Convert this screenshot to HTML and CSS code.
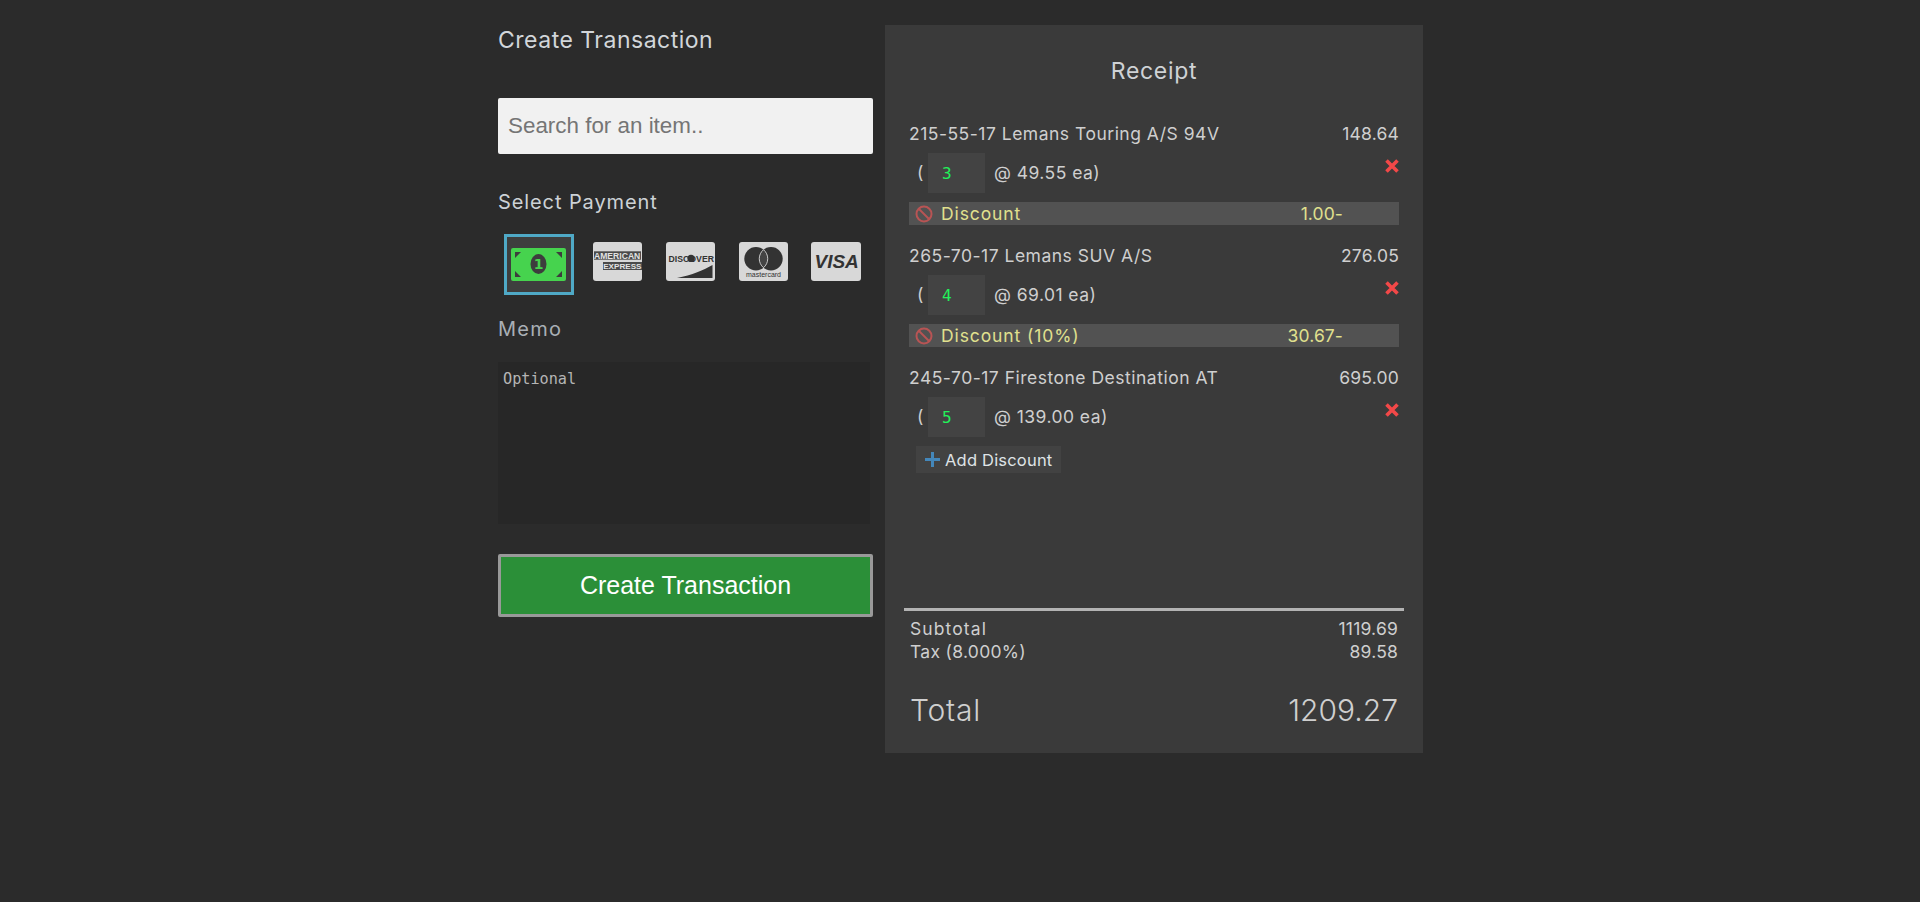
FILE: index.html
```html
<!DOCTYPE html>
<html lang="en">
<head>
<meta charset="utf-8">
<title>Create Transaction</title>
<link rel="stylesheet" href="styles.css">
</head>
<body>
<main class="page">
  <section class="left">
    <h2 class="heading">Create Transaction</h2>
    <input class="search" type="text" placeholder="Search for an item..">
    <h3 class="label">Select Payment</h3>
    <div class="payments">
      <div class="cash">
        <svg width="55" height="33" viewBox="0 0 55 33">
          <rect width="55" height="33" rx="2" fill="#46d34e"/>
          <path d="M4 4h6L4 10zM51 4v6l-6-6zM4 29v-6l6 6zM51 29h-6l6-6z" fill="#3d3d3d"/>
          <ellipse cx="27.5" cy="16" rx="8" ry="10" fill="#3d3d3d"/>
          <text x="27.5" y="21" class="cash-one">1</text>
        </svg>
      </div>
      <svg class="card" viewBox="0 0 49 39">
        <rect width="49" height="39" rx="3" fill="#d8d8d8"/>
        <rect x="1" y="9.3" width="47" height="8.4" fill="#4a4a4a"/>
        <rect x="10" y="20" width="39" height="8" fill="#4a4a4a"/>
        <text x="1" y="16.8" class="amex">AMERICAN</text>
        <text x="10.2" y="27.2" class="amex-two">EXPRESS</text>
      </svg>
      <svg class="card" viewBox="0 0 49 39">
        <rect width="49" height="39" rx="3" fill="#d8d8d8"/>
        <text x="2.6" y="19.6" class="disc">DISCOVER</text>
        <circle cx="25" cy="16.4" r="3.6" fill="#333"/>
        <path d="M11 36 C26 33 38 28 46.5 23V36z" fill="#333"/>
      </svg>
      <svg class="card" viewBox="0 0 49 39">
        <rect width="49" height="39" rx="3" fill="#d8d8d8"/>
        <circle cx="17" cy="16.7" r="11.7" fill="#333"/>
        <circle cx="32" cy="16.7" r="11.7" fill="#333"/>
        <path d="M24.5 7.7A11.7 11.7 0 0 1 24.5 25.7A11.7 11.7 0 0 1 24.5 7.7z" fill="#444" stroke="#d8d8d8" stroke-width=".9"/>
        <text x="7" y="34.5" class="mc">mastercard</text>
      </svg>
      <svg class="card card-visa" viewBox="0 0 50 39">
        <rect width="50" height="39" rx="3" fill="#d8d8d8"/>
        <text x="3.5" y="26.3" class="visa">VISA</text>
      </svg>
    </div>
    <h3 class="label memo-label">Memo</h3>
    <textarea class="memo" placeholder="Optional"></textarea>
    <button class="create" type="button">Create Transaction</button>
  </section>

  <section class="receipt">
    <h2 class="receipt-title">Receipt</h2>
    <div class="items">
      <article class="item">
        <div class="line"><span class="name">215-55-17 Lemans Touring A/S 94V</span><span class="amt">148.64</span></div>
        <div class="qty-row">
          <span class="paren">(</span><input class="qty" type="text" value="3"><span class="each">@ 49.55 ea)</span>
          <svg class="remove" viewBox="0 0 16 16"><path d="M2.5 2.5l11 11M13.5 2.5l-11 11"/></svg>
        </div>
        <div class="discount">
          <svg class="ban" viewBox="0 0 18 18"><circle cx="9" cy="9" r="7.5"/><path d="M4 4l10 10"/></svg>
          <span class="discount-name">Discount</span><span class="discount-amt">1.00-</span>
        </div>
      </article>
      <article class="item">
        <div class="line"><span class="name">265-70-17 Lemans SUV A/S</span><span class="amt">276.05</span></div>
        <div class="qty-row">
          <span class="paren">(</span><input class="qty" type="text" value="4"><span class="each">@ 69.01 ea)</span>
          <svg class="remove" viewBox="0 0 16 16"><path d="M2.5 2.5l11 11M13.5 2.5l-11 11"/></svg>
        </div>
        <div class="discount">
          <svg class="ban" viewBox="0 0 18 18"><circle cx="9" cy="9" r="7.5"/><path d="M4 4l10 10"/></svg>
          <span class="discount-name">Discount (10%)</span><span class="discount-amt">30.67-</span>
        </div>
      </article>
      <article class="item">
        <div class="line"><span class="name">245-70-17 Firestone Destination AT</span><span class="amt">695.00</span></div>
        <div class="qty-row">
          <span class="paren">(</span><input class="qty" type="text" value="5"><span class="each">@ 139.00 ea)</span>
          <svg class="remove" viewBox="0 0 16 16"><path d="M2.5 2.5l11 11M13.5 2.5l-11 11"/></svg>
        </div>
        <button class="add-discount" type="button">
          <svg class="plus" viewBox="0 0 15 15"><path d="M7.5 0v15M0 7.5h15"/></svg>Add Discount
        </button>
      </article>
    </div>
    <div class="totals">
      <div class="sub"><span class="sub-name">Subtotal</span><span class="sub-amt">1119.69</span></div>
      <div class="sub"><span class="sub-name sub-tax">Tax (8.000%)</span><span class="sub-amt">89.58</span></div>
      <div class="grand"><span class="grand-name">Total</span><span>1209.27</span></div>
    </div>
  </section>
</main>
</body>
</html>
```
FILE: styles.css
```css
* { box-sizing: border-box; }
html, body { margin: 0; height: 100%; }
body {
  background: #2b2b2b;
  color: #cfcfcf;
  font-family: Inter, "Liberation Sans", sans-serif;
}
.page {
  display: flex;
  justify-content: center;
  gap: 11px;
  padding: 25px 0 0 1px;
}
.left { width: 376px; display: flex; flex-direction: column; }
.heading {
  margin: 0;
  font-size: 23px;
  line-height: 30px;
  font-weight: 400;
  letter-spacing: .5px;
  color: #d2d6da;
}
.search {
  margin-top: 43px;
  width: 375px;
  height: 56px;
  border: 0;
  border-radius: 2px;
  background: #f1f1f1;
  padding: 0 10px;
  font: 22.4px "Liberation Sans", Arial, sans-serif;
  color: #333;
}
.search::placeholder { color: #757575; opacity: 1; }
.label {
  margin: 36px 0 0;
  font-size: 20px;
  line-height: 24px;
  font-weight: 400;
  letter-spacing: .9px;
  color: #cdd2d6;
}
.memo-label { margin-top: 22px; color: #a9afb5; letter-spacing: 1.25px; }
.payments {
  margin: 20px 0 0 6px;
  display: flex;
  gap: 24px;
  align-items: flex-start;
}
.cash {
  width: 70px;
  height: 61px;
  margin-right: -5px;
  background: #3e3e3e;
  border: 3px solid #4fa9c6;
  display: flex;
  align-items: center;
  justify-content: center;
  flex: none;
}
.cash svg { display: block; margin-right: 1px; }
.cash-one { font: 700 14px "DejaVu Sans", sans-serif; fill: #46d34e; text-anchor: middle; }
.card { width: 49px; height: 39px; margin-top: 8px; flex: none; display: block; }
.card-visa { width: 50px; margin-left: -1px; }
.amex { font: 700 8.6px "Liberation Sans", sans-serif; fill: #e2e2e2; }
.amex-two { font: 700 8.1px "Liberation Sans", sans-serif; fill: #e2e2e2; }
.disc { font: 700 8.7px "Liberation Sans", sans-serif; fill: #333; }
.mc { font: 400 7px "Liberation Sans", sans-serif; fill: #333; }
.visa { font: italic 700 19px "Liberation Sans", sans-serif; fill: #333; }
.memo {
  margin-top: 21px;
  width: 372px;
  height: 162px;
  border: 0;
  resize: none;
  background: #272727;
  padding: 9px 5px;
  font: 15.2px/17px "DejaVu Sans Mono", monospace;
  color: #ccc;
  display: block;
}
.memo::placeholder { color: #b5b5b5; opacity: 1; }
.create {
  margin-top: 30px;
  width: 375px;
  height: 63px;
  border: 3px solid #999;
  border-radius: 2px;
  background: #2b8f38;
  color: #fff;
  font: 25px "Liberation Sans", Arial, sans-serif;
  padding: 0;
}
.receipt {
  width: 538px;
  height: 728px;
  background: #3a3a3a;
  padding: 0 24px;
  display: flex;
  flex-direction: column;
  font-size: 17.5px;
}
.receipt-title {
  margin: 0;
  padding: 34px 0 39px;
  line-height: 24px;
  font-size: 23px;
  font-weight: 400;
  letter-spacing: .7px;
  text-align: center;
  color: #cfd2d5;
}
.items { flex: 1; }
.item { margin-bottom: 19px; }
.line { display: flex; justify-content: space-between; line-height: 24px; }
.name { letter-spacing: .5px; }
.amt { letter-spacing: .2px; }
.each { letter-spacing: .45px; padding-bottom: 2px; }
.qty-row {
  display: flex;
  align-items: center;
  height: 40px;
  margin-top: 7px;
  padding-left: 8px;
  position: relative;
}
.paren { width: 11px; padding-bottom: 2px; }
.qty {
  width: 57px;
  height: 40px;
  border: 0;
  background: #434343;
  color: #22f25a;
  font: 16px "DejaVu Sans Mono", monospace;
  padding: 0 14px;
  margin-right: 9px;
}
.remove {
  position: absolute;
  right: -1px;
  top: 5px;
  width: 16px;
  height: 16px;
  fill: none;
  stroke: #f24848;
  stroke-width: 3.6;
}
.discount {
  display: flex;
  align-items: center;
  margin-top: 9px;
  height: 23px;
  background: #525252;
  color: #e0e08e;
  padding-left: 6px;
}
.ban { width: 18px; height: 18px; fill: none; stroke: #b85454; stroke-width: 2; flex: none; }
.discount-name { margin-left: 8px; letter-spacing: .9px; }
.discount-amt { margin-left: auto; margin-right: 56px; letter-spacing: .1px; }
.add-discount {
  display: flex;
  align-items: center;
  margin: 9px 0 0 7px;
  width: 145px;
  height: 27px;
  padding: 0 0 0 9px;
  border: 0;
  background: #424242;
  color: #dfe3e6;
  font: 16.5px Inter, sans-serif;
  letter-spacing: .2px;
}
.plus { width: 15px; height: 15px; fill: none; stroke: #4487ba; stroke-width: 3; margin-right: 5px; flex: none; }
.totals {
  margin: 0 -5px;
  padding: 6px 6px 23px;
  border-top: 3px solid #b3b3b3;
}
.sub { display: flex; justify-content: space-between; line-height: 23px; color: #cfcfcf; font-size: 17.5px; }
.sub-name { letter-spacing: 1.1px; }
.sub-tax { letter-spacing: .3px; }
.sub-amt { letter-spacing: .2px; }
.grand {
  display: flex;
  justify-content: space-between;
  margin-top: 27px;
  line-height: 40px;
  font-size: 30px;
  font-weight: 350;
  color: #cfcfcf;
}
.grand-name { letter-spacing: .8px; }
```
